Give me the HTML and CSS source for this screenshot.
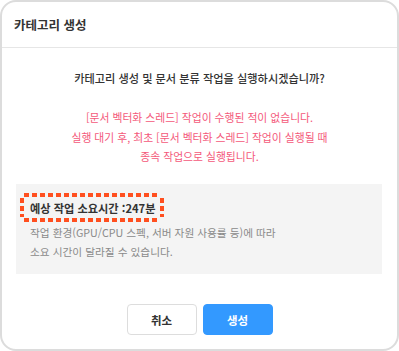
FILE: index.html
```html
<!DOCTYPE html>
<html lang="ko">
<head>
<meta charset="utf-8">
<link rel="stylesheet" href="styles.css">
</head>
<body>
<div class="dialog">
  <div class="header">카테고리 생성</div>
  <div class="content">
    <p class="question">카테고리 생성 및 문서 분류 작업을 실행하시겠습니까?</p>
    <p class="warn">[문서 벡터화 스레드] 작업이 수행된 적이 없습니다.<br>실행 대기 후, 최초 [문서 벡터화 스레드] 작업이 실행될 때<br>종속 작업으로 실행됩니다.</p>
    <div class="info">
      <div class="estimate">예상 작업 소요시간 :247분</div>
      <p class="note">작업 환경(GPU/CPU 스펙, 서버 자원 사용률 등)에 따라<br>소요 시간이 달라질 수 있습니다.</p>
    </div>
  </div>
  <div class="actions">
    <button class="btn cancel">취소</button>
    <button class="btn primary">생성</button>
  </div>
</div>
</body>
</html>
```
FILE: styles.css
```css
* { box-sizing: border-box; }
html, body { margin: 0; padding: 0; background: #fff; }
body { font-family: "Noto Sans CJK KR", "Noto Sans", sans-serif; color: #333; }
.dialog {
  width: 399px;
  height: 351px;
  border: 2px solid #dcdcdc;
  border-radius: 16px;
  background: #fff;
  display: flex;
  flex-direction: column;
}
.header {
  height: 46px;
  border-bottom: 1px solid #e6e6e6;
  padding: 0 12px;
  display: flex;
  align-items: center;
  font-size: 12.5px;
  font-weight: 700;
  color: #333;
}
.content { padding: 20px 14px 0; }
.question {
  margin: 0;
  text-align: center;
  font-size: 11.2px;
  font-weight: 500;
  line-height: 20px;
  color: #333;
}
.warn {
  margin: 20px 0 0;
  text-align: center;
  font-size: 10.8px;
  line-height: 19.5px;
  color: #f4587a;
}
.info {
  margin-top: 17px;
  background: #f4f4f4;
  padding: 9px 14px 12px 4px;
  width: 366px;
}
.estimate {
  display: inline-block;
  padding: 5px 9px 4px 10px;
  font-size: 11.2px;
  font-weight: 700;
  color: #333;
  line-height: 20px;
  background:
    repeating-linear-gradient(90deg, #ff4f1f 0 5px, transparent 5px 8px) 4px 0 / calc(100% - 8px) 4px no-repeat,
    repeating-linear-gradient(90deg, #ff4f1f 0 5px, transparent 5px 8px) 4px 100% / calc(100% - 8px) 4px no-repeat,
    repeating-linear-gradient(180deg, #ff4f1f 0 5px, transparent 5px 8px) 0 5px / 4px calc(100% - 10px) no-repeat,
    repeating-linear-gradient(180deg, #ff4f1f 0 5px, transparent 5px 8px) 100% 5px / 4px calc(100% - 10px) no-repeat;
}
.note {
  margin: 1px 0 0 10px;
  font-size: 10.7px;
  line-height: 19.5px;
  color: #8a8a8a;
}
.actions {
  margin-top: auto;
  padding-bottom: 14px;
  display: flex;
  justify-content: center;
  gap: 6px;
}
.btn {
  width: 70px;
  height: 31px;
  border-radius: 4px;
  font-family: inherit;
  font-size: 11.5px;
  font-weight: 700;
}
.cancel { background: #fff; border: 1px solid #ddd; color: #333; }
.primary { background: #3399ff; border: 1px solid #3399ff; color: #fff; }
```
